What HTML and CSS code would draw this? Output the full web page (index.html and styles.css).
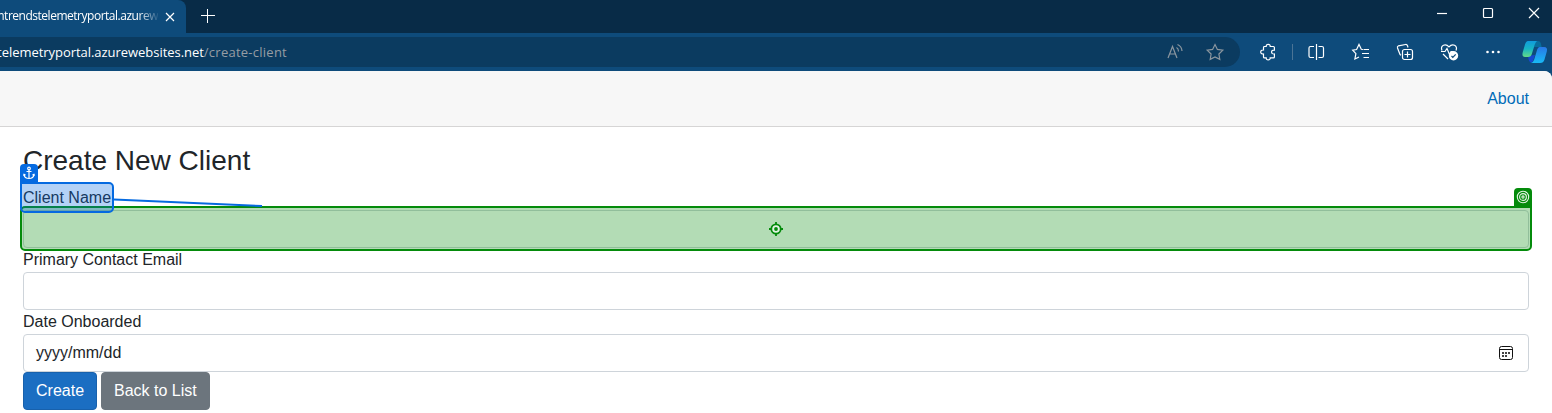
FILE: index.html
```html
<!DOCTYPE html>
<html lang="en">
<head>
<meta charset="utf-8">
<title>Create New Client</title>
<link rel="stylesheet" href="styles.css">
</head>
<body>
<div class="browser">
  <div class="tabstrip">
    <div class="tab">
      <span class="tab-title"><span class="tab-text">ntrendstelemetryportal.azurew</span></span>
      <svg class="tab-close" width="10" height="10" viewBox="0 0 10 10"><path d="M1 1 9 9M9 1 1 9"/></svg>
    </div>
    <svg class="new-tab" width="14" height="14" viewBox="0 0 14 14"><path d="M6.500 0v14M0 6.500h14"/></svg>
    <div class="window-controls">
      <svg width="12" height="12" viewBox="0 0 12 12"><path d="M1 6.5h10"/></svg>
      <svg width="12" height="12" viewBox="0 0 12 12"><rect x="1.5" y="1.5" width="9" height="9" rx="1"/></svg>
      <svg width="12" height="12" viewBox="0 0 12 12"><path d="M1 1 11 11M11 1 1 11"/></svg>
    </div>
  </div>
  <div class="toolbar">
    <div class="address">
      <div class="url"><span class="host">telemetryportal.azurewebsites.net</span><span class="path">/create-client</span></div>
      <div class="address-icons">
        <svg width="20" height="20" viewBox="0 0 20 20"><path d="M3 16 7.5 4.5 12 16M4.6 12h5.800M11.500 5.500q2 1 2 4M12.500 2.500q4.200 1.800 4.500 6.500"/></svg>
        <svg width="20" height="20" viewBox="0 0 20 20"><path d="m10 2.500 2.400 4.900 5.400.8-3.900 3.800.9 5.400L10 14.900l-4.800 2.500.9-5.400L2.200 8.200l5.400-.8z"/></svg>
      </div>
    </div>
    <svg class="tool puzzle" width="20" height="20" viewBox="0 0 20 20"><path d="M5.500 4.500h2.700q-.1-2.200 2-2.200t2 2.200h3.200q1 0 1 1v2.700q-2.800-.2-2.800 1.900t2.800 1.900v2.900q0 1-1 1h-3.200q.1 2-2 2t-2-2H6.500q-1 0-1-1V12q-2.800.2-2.800-2t2.800-2V5.500q0-1 1-1"/></svg>
    <span class="divider"></span>
    <svg class="tool split" width="20" height="20" viewBox="0 0 20 20"><path d="M8 4.500H4.500q-1.500 0-1.500 1.500v8q0 1.500 1.500 1.500H8M12.500 4.500H16q1.500 0 1.500 1.500v8q0 1.500-1.500 1.500h-3.500M10.500 2v16"/></svg>
    <svg class="tool favorites" width="20" height="20" viewBox="0 0 20 20"><path d="M12 7.500 10.300 7.300 8 2.500 5.600 7.500l-3.900.6 3.200 3.500-1 5.400L8 15M12.500 7.500H18M11 11.500H18M12.500 15.500H18"/></svg>
    <svg class="tool collections" width="20" height="20" viewBox="0 0 20 20"><path d="M5 12.500 2.500 6q-.5-1.500 1-2.200L10.500 2.500q1.500-.2 2 1.200l.5 1.800M5 12.500l1 .8"/><rect x="7.500" y="7.500" width="10" height="10" rx="2"/><path d="M12.500 9.500v6M9.500 12.500h6"/></svg>
    <svg class="tool health" width="20" height="20" viewBox="0 0 20 20"><path d="M3 8.500q-1.500-4 1.500-5.300 3-1.200 5.500 1.600 2.500-2.800 5.500-1.600 3 1.600 1.500 5.300M2 9.500h4l2-3 2.500 6 1.500-3h2M4 12l5 5"/><circle class="solid" cx="14.500" cy="13.800" r="4.700"/><path class="tick" d="m12.500 14 1.300 1.300 2.900-3"/></svg>
    <svg class="tool more" width="20" height="20" viewBox="0 0 20 20"><g class="solid"><circle cx="4.500" cy="10" r="1.300"/><circle cx="10" cy="10" r="1.300"/><circle cx="15.500" cy="10" r="1.300"/></g></svg>
    <svg class="copilot" width="26" height="24" viewBox="0 0 26 24">
      <defs>
        <linearGradient id="leaf" x1="0" y1="0" x2="0" y2="1"><stop offset="0" stop-color="#109bdc"/><stop offset=".5" stop-color="#18b5c3"/><stop offset="1" stop-color="#64db86"/></linearGradient>
        <linearGradient id="wave" x1="0" y1="0" x2="0" y2="1"><stop offset="0" stop-color="#2877e6"/><stop offset="1" stop-color="#18baf5"/></linearGradient>
      </defs>
      <path fill="#076c9c" d="M13 1h3q2 0 2.700 2l1 4H12z"/>
      <path fill="#1648cf" d="m6 16 7-1-2 6q-.5 2-2.500 1.500Q7 22 6.500 19z"/>
      <path fill="url(#leaf)" d="M6 1h9q-1.500 1-2.200 3.500l-3 9.500Q9 17 6 17H3Q-.5 17 .8 12L3 4.500Q4 1 6 1z"/>
      <path fill="url(#wave)" d="M17.500 7H22q4 0 2.800 4.500l-2.300 8Q21.500 23 18 23H9q2.500-1 3.200-3.500l3-10Q16 7 17.500 7z"/>
    </svg>
  </div>
</div>
<div class="page">
  <header class="topbar"><a class="about">About</a></header>
  <main class="content">
    <h1>Create New Client</h1>
    <div class="field">
      <label>Client Name</label>
      <div class="input"></div>
      <div class="target-box">
        <svg width="14" height="14" viewBox="0 0 14 14"><circle class="target-fill" cx="7" cy="7" r="4.700"/><circle class="target-dot" cx="7" cy="7" r="1.900"/><path d="M7 0v3M7 11v3M0 7h3M11 7h3"/></svg>
        <span class="target-tag"><svg width="14" height="14" viewBox="0 0 14 14"><circle cx="7" cy="7" r="5.700"/><circle cx="7" cy="7" r="3.400"/><circle cx="7" cy="7" r="1.100"/></svg></span>
      </div>
      <div class="anchor-box">
        <span class="anchor-tag"><svg width="12" height="14" viewBox="0 0 12 14"><circle cx="6" cy="2.500" r="1.300"/><path d="M6 4v8.500M3.500 5.500h5M1 8.500q.4 4 5 4t5-4M.5 9.700 1 8.300l1.500.8M11.500 9.700 11 8.300l-1.500.8"/></svg></span>
      </div>
      <svg class="connector" width="150" height="12" viewBox="0 0 150 12"><path d="M0 3.500 148 10"/></svg>
    </div>
    <div class="field">
      <label>Primary Contact Email</label>
      <div class="input"></div>
    </div>
    <div class="field">
      <label>Date Onboarded</label>
      <div class="input date"><span>yyyy/mm/dd</span>
        <svg width="14" height="14" viewBox="0 0 14 14"><rect x=".5" y=".5" width="13" height="13" rx="2"/><path d="M1 3.500h12"/><path class="days" d="M3 7h2M6 7h2M9 7h2M3 10h2M6 10h2"/></svg>
      </div>
    </div>
    <div class="actions"><button class="btn primary">Create</button><button class="btn secondary">Back to List</button></div>
  </main>
</div>
</body>
</html>
```

FILE: styles.css
```css
* { box-sizing: border-box; }
body { margin: 0; height: 413px; overflow: hidden; background: #0e4b7b; color: #212529; font: 16px/24px "Liberation Sans", Arial, sans-serif; }
svg { display: block; flex: none; fill: none; stroke: #fff; stroke-width: 1.200; }
.browser { height: 71px; font-family: "Open Sans", "Noto Sans", sans-serif; }
.tabstrip { height: 33px; display: flex; background: #082b47; }
.tab { width: 186px; height: 33px; background: #0e4b7b; border-radius: 0 8px 0 0; display: flex; align-items: center; }
.tab-title { width: 158px; height: 33px; display: flex; justify-content: flex-end; overflow: hidden; white-space: nowrap; font-size: 12px; line-height: 32px; letter-spacing: -.48px; color: #fff; -webkit-mask-image: linear-gradient(90deg, #000 138px, transparent 160px); mask-image: linear-gradient(90deg, #000 138px, transparent 160px); }
.tab-close { margin-left: 7px; }
.new-tab { margin: 9px 0 0 15px; stroke-width: 1; }
.window-controls { margin-left: auto; padding: 7px 12px 0 0; display: flex; gap: 34px; }
.toolbar { height: 38px; padding-top: 4px; display: flex; background: #0e4b7b; }
.address { width: 1240px; height: 30px; background: #0b3b60; border-radius: 0 15px 15px 0; display: flex; justify-content: space-between; align-items: center; }
.url { width: 287px; display: flex; justify-content: flex-end; overflow: hidden; white-space: nowrap; font-size: 13px; line-height: 30px; }
.host { color: #fff; letter-spacing: -.04px; }
.path { color: #969da4; letter-spacing: .25px; }
.address-icons { display: flex; gap: 20px; padding-right: 15px; }
.address-icons svg { stroke: #8b969f; }
.tool { margin-top: 5px; }
.puzzle { margin-left: 18px; }
.divider { width: 1px; height: 16px; margin: 7px 13px 0 14px; background: #4b7495; }
.favorites { margin-left: 25px; }
.collections, .health, .more { margin-left: 24px; }
.solid { fill: #fff; stroke: none; }
.tick { stroke: #0e4b7b; }
.copilot { margin: 3px 0 0 19px; stroke: none; }
.page { height: 342px; background: #fff; border-top-right-radius: 8px; overflow: hidden; }
.topbar { height: 56px; padding: 0 23px; display: flex; align-items: center; justify-content: flex-end; background: #f7f7f7; border-bottom: 1px solid #d6d5d5; }
.about { color: #006bb7; }
.content { padding: 17px 23px 0; }
h1 { margin: 0 0 8px; font-size: 28px; line-height: 34px; font-weight: 400; }
.field { position: relative; height: 62px; }
label { display: block; height: 24px; line-height: 24px; }
.input { height: 38px; padding: 0 15px 0 12px; border: 1px solid #ced4da; border-radius: 4px; background: #fff; }
.date { display: flex; align-items: center; justify-content: space-between; }
.date svg { stroke: #111; stroke-width: 1; }
.date .days { stroke: #444; stroke-width: 2; }
.target-box { position: absolute; left: -3px; right: -3px; top: 20px; height: 45px; border: 2px solid #048b0b; border-radius: 5px 0 5px 5px; background: rgba(4, 139, 11, .3); display: flex; align-items: center; justify-content: center; }
.target-box svg { stroke: #048b0b; stroke-width: 1.800; }
.target-box .target-fill { fill: #e2f2e3; }
.target-dot { fill: #048b0b; stroke: none; }
.target-tag { position: absolute; right: -2px; top: -20px; width: 18px; height: 19px; padding: 2px; border-radius: 4px 4px 0 0; background: #048b0b; }
.target-tag svg { stroke: #e3f3e3; stroke-width: 1.100; }
.anchor-box { position: absolute; left: -3px; top: -4px; width: 94px; height: 31px; border: 2px solid #056ae0; border-radius: 0 5px 5px 5px; background: rgba(5, 106, 224, .3); }
.anchor-tag { position: absolute; left: -2px; top: -20px; width: 18px; height: 19px; padding: 2px 3px; border-radius: 4px 4px 0 0; background: #056ae0; }
.anchor-tag svg { stroke-width: 1.200; }
.connector { position: absolute; left: 91px; top: 10px; stroke: #056ae0; stroke-width: 2; }
.actions { display: flex; gap: 4px; }
.btn { height: 38px; padding: 0 12px; border: 1px solid; border-radius: 4px; color: #fff; font: inherit; }
.primary { background: #1b6ec2; border-color: #1861ac; }
.secondary { background: #6c757d; border-color: #6c757d; }
```
